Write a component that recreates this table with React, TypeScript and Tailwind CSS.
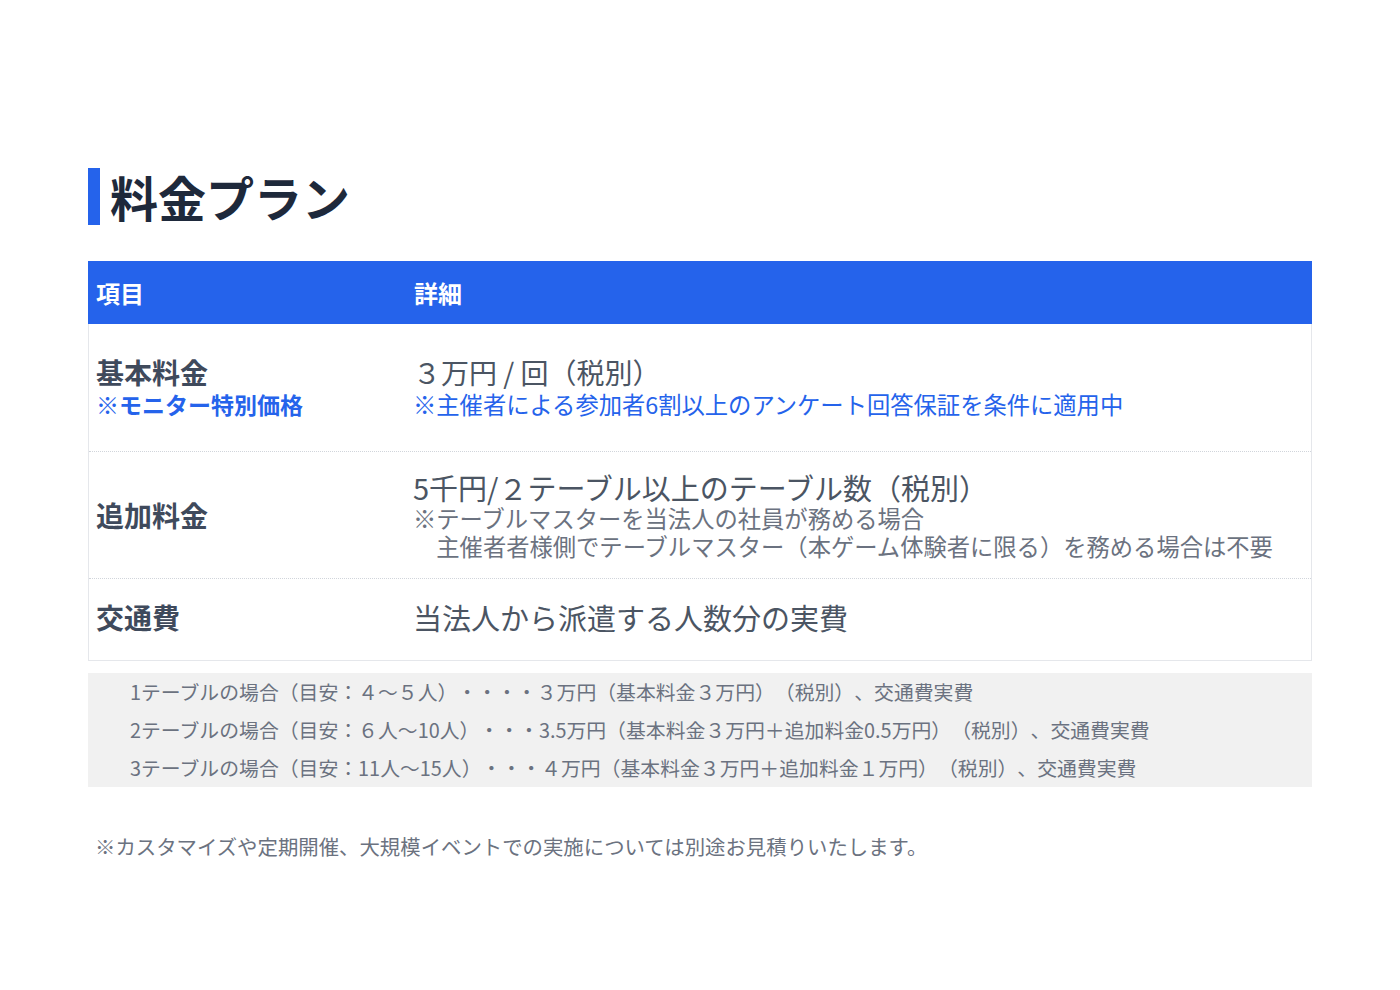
import React from "react";

const rows = [
  {
    label: "基本料金",
    sub: "※モニター特別価格",
    height: "h-[127px]",
    detail: (
      <>
        <p className="text-[28px] leading-[32px] text-[#4b5563]">３万円 / 回（税別）</p>
        <p className="text-[23.3px] leading-[32px] text-[#2563eb]">
          ※主催者による参加者6割以上のアンケート回答保証を条件に適用中
        </p>
      </>
    ),
  },
  {
    label: "追加料金",
    height: "h-[127px]",
    detail: (
      <>
        <p className="text-[29px] leading-[33px] text-[#4b5563]">
          5千円/２テーブル以上のテーブル数（税別）
        </p>
        <p className="text-[23.3px] leading-[28px] text-[#6b7280]">
          ※テーブルマスターを当法人の社員が務める場合
        </p>
        <p className="text-[23.3px] leading-[28px] text-[#6b7280]">
          {"\u3000主催者者様側でテーブルマスター（本ゲーム体験者に限る）を務める場合は不要"}
        </p>
      </>
    ),
  },
  {
    label: "交通費",
    height: "h-[82px] pb-[5px]",
    detail: (
      <p className="text-[29px] leading-[34px] text-[#4b5563]">当法人から派遣する人数分の実費</p>
    ),
  },
];

const examples = [
  "1テーブルの場合（目安：４～５人）・・・・３万円（基本料金３万円）（税別）、交通費実費",
  "2テーブルの場合（目安：６人～10人）・・・3.5万円（基本料金３万円＋追加料金0.5万円）（税別）、交通費実費",
  "3テーブルの場合（目安：11人～15人）・・・４万円（基本料金３万円＋追加料金１万円）（税別）、交通費実費",
];

export default function App() {
  return (
    <div
      className="min-h-[990px] bg-white px-[88px] pt-[168px] [text-spacing-trim:space-all]"
      style={{ fontFamily: '"Noto Sans CJK JP", "Noto Sans", sans-serif' }}
    >
      {/* heading */}
      <div className="flex items-center gap-[10px]">
        <div className="h-[57px] w-[12px] bg-[#2563eb]" />
        <h1 className="text-[48px] font-bold leading-[57px] text-[#1e293b]">料金プラン</h1>
      </div>

      {/* table */}
      <div className="mt-[36px] border-x border-b border-[#e5e7eb]">
        <div className="-mx-px flex h-[63px] items-center bg-[#2563eb] text-[24px] font-bold text-white">
          <div className="w-[318px] pl-[8px]">項目</div>
          <div className="pl-[8px]">詳細</div>
        </div>
        {rows.map((r, i) => (
          <div
            key={r.label}
            className={`flex items-center ${r.height} ${i > 0 ? "border-t border-dotted border-[#d1d5db]" : ""}`}
          >
            <div className="w-[317px] pl-[7px]">
              <p className="text-[28px] font-bold leading-[32px] text-[#3f4a5c]">{r.label}</p>
              {r.sub && (
                <p className="text-[23px] font-bold leading-[32px] text-[#2563eb]">{r.sub}</p>
              )}
            </div>
            <div className="pl-[7px]">{r.detail}</div>
          </div>
        ))}
      </div>

      {/* examples */}
      <div className="mt-[12px] bg-[#f1f1f1] pl-[42px]">
        {examples.map((e) => (
          <p key={e} className="text-[19.85px] leading-[38px] text-[#6b7280]">
            {e}
          </p>
        ))}
      </div>

      <p className="mt-[44px] pl-[7px] text-[20.4px] leading-[30px] text-[#6b7280]">
        ※カスタマイズや定期開催、大規模イベントでの実施については別途お見積りいたします。
      </p>
    </div>
  );
}
